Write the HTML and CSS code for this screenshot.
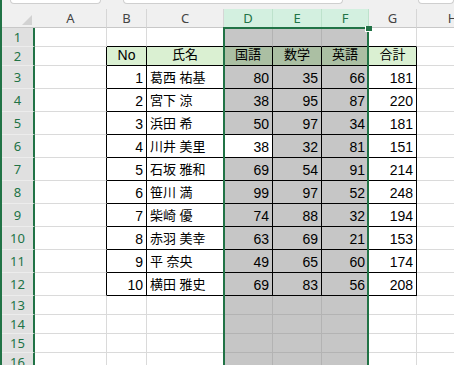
FILE: index.html
```html
<!DOCTYPE html>
<html lang="ja">
<head>
    <meta charset="UTF-8">
    <meta name="viewport" content="width=device-width, initial-scale=1.0">
    <title>成績表</title>
    <link rel="stylesheet" href="styles.css">
</head>
<body>

    <div class="window">
        <div class="topbar">
            <div class="box namebox"></div>
            <div class="box formula"></div>
            <div class="box extra"></div>
        </div>

        <div class="sheet">
            <div class="row colhead">
                <div class="corner"></div>
                <div class="ch">A</div>
                <div class="ch">B</div>
                <div class="ch">C</div>
                <div class="ch on">D</div>
                <div class="ch on">E</div>
                <div class="ch on">F</div>
                <div class="ch">G</div>
                <div class="ch">H</div>
            </div>

            <div class="row">
                <div class="rh">1</div>
                <div class="c"></div>
                <div class="c tt"></div>
                <div class="c tt"></div>
                <div class="c sel tt"></div>
                <div class="c sel tt"></div>
                <div class="c sel tt"></div>
                <div class="c tt"></div>
                <div class="c"></div>
            </div>

            <!-- 見出し行 -->
            <div class="row">
                <div class="rh">2</div>
                <div class="c tl"></div>
                <div class="c tb hd">No</div>
                <div class="c tb hd jp">氏名</div>
                <div class="c tb hd sel jp">国語</div>
                <div class="c tb hd sel jp">数学</div>
                <div class="c tb hd sel jp">英語</div>
                <div class="c tb hd jp">合計</div>
                <div class="c"></div>
            </div>

            <div class="row tall">
                <div class="rh">3</div>
                <div class="c tl"></div>
                <div class="c tb num">1</div>
                <div class="c tb jp">葛西 祐基</div>
                <div class="c tb num sel">80</div>
                <div class="c tb num sel">35</div>
                <div class="c tb num sel">66</div>
                <div class="c tb num">181</div>
                <div class="c"></div>
            </div>
            <div class="row tall">
                <div class="rh">4</div>
                <div class="c tl"></div>
                <div class="c tb num">2</div>
                <div class="c tb jp">宮下 涼</div>
                <div class="c tb num sel">38</div>
                <div class="c tb num sel">95</div>
                <div class="c tb num sel">87</div>
                <div class="c tb num">220</div>
                <div class="c"></div>
            </div>
            <div class="row tall">
                <div class="rh">5</div>
                <div class="c tl"></div>
                <div class="c tb num">3</div>
                <div class="c tb jp">浜田 希</div>
                <div class="c tb num sel">50</div>
                <div class="c tb num sel">97</div>
                <div class="c tb num sel">34</div>
                <div class="c tb num">181</div>
                <div class="c"></div>
            </div>
            <div class="row tall">
                <div class="rh">6</div>
                <div class="c tl"></div>
                <div class="c tb num">4</div>
                <div class="c tb jp">川井 美里</div>
                <div class="c tb num">38</div>
                <div class="c tb num sel">32</div>
                <div class="c tb num sel">81</div>
                <div class="c tb num">151</div>
                <div class="c"></div>
            </div>
            <div class="row tall">
                <div class="rh">7</div>
                <div class="c tl"></div>
                <div class="c tb num">5</div>
                <div class="c tb jp">石坂 雅和</div>
                <div class="c tb num sel">69</div>
                <div class="c tb num sel">54</div>
                <div class="c tb num sel">91</div>
                <div class="c tb num">214</div>
                <div class="c"></div>
            </div>
            <div class="row tall">
                <div class="rh">8</div>
                <div class="c tl"></div>
                <div class="c tb num">6</div>
                <div class="c tb jp">笹川 満</div>
                <div class="c tb num sel">99</div>
                <div class="c tb num sel">97</div>
                <div class="c tb num sel">52</div>
                <div class="c tb num">248</div>
                <div class="c"></div>
            </div>
            <div class="row tall">
                <div class="rh">9</div>
                <div class="c tl"></div>
                <div class="c tb num">7</div>
                <div class="c tb jp">柴崎 優</div>
                <div class="c tb num sel">74</div>
                <div class="c tb num sel">88</div>
                <div class="c tb num sel">32</div>
                <div class="c tb num">194</div>
                <div class="c"></div>
            </div>
            <div class="row tall">
                <div class="rh">10</div>
                <div class="c tl"></div>
                <div class="c tb num">8</div>
                <div class="c tb jp">赤羽 美幸</div>
                <div class="c tb num sel">63</div>
                <div class="c tb num sel">69</div>
                <div class="c tb num sel">21</div>
                <div class="c tb num">153</div>
                <div class="c"></div>
            </div>
            <div class="row tall">
                <div class="rh">11</div>
                <div class="c tl"></div>
                <div class="c tb num">9</div>
                <div class="c tb jp">平 奈央</div>
                <div class="c tb num sel">49</div>
                <div class="c tb num sel">65</div>
                <div class="c tb num sel">60</div>
                <div class="c tb num">174</div>
                <div class="c"></div>
            </div>
            <div class="row tall">
                <div class="rh">12</div>
                <div class="c tl"></div>
                <div class="c tb num">10</div>
                <div class="c tb jp">横田 雅史</div>
                <div class="c tb num sel">69</div>
                <div class="c tb num sel">83</div>
                <div class="c tb num sel">56</div>
                <div class="c tb num">208</div>
                <div class="c"></div>
            </div>

            <!-- 空の行 -->
            <div class="row">
                <div class="rh">13</div>
                <div class="c"></div>
                <div class="c"></div>
                <div class="c"></div>
                <div class="c sel"></div>
                <div class="c sel"></div>
                <div class="c sel"></div>
                <div class="c"></div>
                <div class="c"></div>
            </div>
            <div class="row">
                <div class="rh">14</div>
                <div class="c"></div>
                <div class="c"></div>
                <div class="c"></div>
                <div class="c sel"></div>
                <div class="c sel"></div>
                <div class="c sel"></div>
                <div class="c"></div>
                <div class="c"></div>
            </div>
            <div class="row">
                <div class="rh">15</div>
                <div class="c"></div>
                <div class="c"></div>
                <div class="c"></div>
                <div class="c sel"></div>
                <div class="c sel"></div>
                <div class="c sel"></div>
                <div class="c"></div>
                <div class="c"></div>
            </div>
            <div class="row">
                <div class="rh">16</div>
                <div class="c"></div>
                <div class="c"></div>
                <div class="c"></div>
                <div class="c sel"></div>
                <div class="c sel"></div>
                <div class="c sel"></div>
                <div class="c"></div>
                <div class="c"></div>
            </div>
        </div>

        <!-- 選択範囲の枠 -->
        <div class="selection"></div>
        <div class="handle"></div>
    </div>

</body>
</html>
```

FILE: styles.css
```css
* {
    box-sizing: border-box;
}

body {
    margin: 0;
    background-color: #fff;
    font-family: "Liberation Sans", "Noto Sans CJK JP", sans-serif;
    font-size: 14px;
    color: #000;
}

.window {
    position: relative;
    width: 454px;
    height: 365px;
    overflow: hidden;
    border-left: 2px solid #217346;
}

/* 数式バーの下端 */
.topbar {
    display: flex;
    height: 9px;
    background-color: #f0f0f0;
}

.box {
    height: 4px;
    background-color: #fff;
    border: 1px solid #cfcfcf;
    border-top: none;
    border-radius: 0 0 4px 4px;
}

.namebox {
    margin-left: 8px;
    width: 100px;
}

.formula {
    margin-left: 22px;
    width: 243px;
}

.extra {
    margin-left: 75px;
    width: 40px;
}

.row {
    display: grid;
    grid-template-columns: 33px 72px 40px 77px 49px 49px 47px 48px 72px;
    height: 19px;
}

.row.tall {
    height: 23px;
}

/* 列見出し */
.colhead .ch,
.corner {
    display: flex;
    justify-content: center;
    align-items: center;
    background-color: #f0f0f0;
    border-right: 1px solid #d6d6d6;
    border-bottom: 1px solid #c8c8c8;
    font-family: "Noto Sans", sans-serif;
    font-size: 13px;
    color: #444;
}

.colhead .ch.on {
    background-color: #d3f0e0;
    border-right-color: #bde2cc;
    color: #217346;
}

.corner {
    justify-content: flex-end;
    align-items: flex-end;
    padding: 0 3px 2px 0;
    border-right: none;
}

.corner::after {
    content: "";
    width: 10px;
    height: 10px;
    background-color: #d2d2d2;
    clip-path: polygon(100% 0, 100% 100%, 0 100%);
}

/* 行番号 */
.rh {
    display: flex;
    justify-content: center;
    align-items: center;
    background-color: #e0e0e0;
    border-right: 2px solid #217346;
    border-bottom: 1px solid #ececec;
    font-family: "Noto Sans", sans-serif;
    font-size: 13px;
    color: #217346;
}

/* セル */
.c {
    display: flex;
    align-items: flex-end;
    padding: 0 3px 2px 3px;
    border-right: 1px solid #dadada;
    border-bottom: 1px solid #dadada;
    line-height: 16px;
    white-space: nowrap;
}

.num {
    justify-content: flex-end;
}

.jp {
    font-size: 13px;
}

.hd {
    justify-content: center;
    background-color: #daf0d2;
}

.sel {
    background-color: #c6c6c6;
    border-color: #b3b3b3;
}

.sel.hd {
    background-color: #abbfa3;
}

/* 表の罫線 */
.tb {
    border-right-color: #000;
    border-bottom-color: #000;
}

.tl {
    border-right-color: #000;
}

.tt {
    border-bottom-color: #000;
}

.selection {
    position: absolute;
    left: 221px;
    top: 27px;
    width: 146px;
    height: 350px;
    border: 2px solid #217346;
}

.handle {
    position: absolute;
    left: 363px;
    top: 26px;
    width: 7px;
    height: 6px;
    background-color: #217346;
    border-left: 1px solid #fff;
    border-bottom: 1px solid #fff;
}
```
